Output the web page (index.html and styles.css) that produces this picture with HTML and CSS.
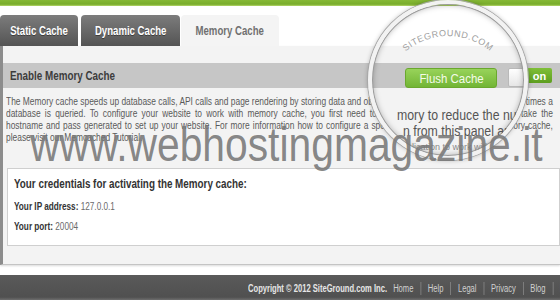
FILE: index.html
```html
<!DOCTYPE html>
<html>
<head>
<meta charset="utf-8">
<link rel="stylesheet" href="styles.css">
</head>
<body>
<div class="page">
  <div class="topbar"></div>
  <div class="tabs">
    <div class="tab dark tab-static"><span class="tab-label">Static Cache</span></div>
    <div class="tab dark tab-dynamic"><span class="tab-label">Dynamic Cache</span></div>
    <div class="tab active"><span class="tab-label">Memory Cache</span></div>
  </div>
  <div class="panel">
    <div class="enable-bar">
      <span class="enable-title">Enable Memory Cache</span>
      <div class="controls">
        <button class="flush"><span class="flush-label">Flush Cache</span></button>
        <div class="toggle"><span class="off"></span><span class="on">on</span></div>
      </div>
    </div>
    <div class="desc">
      <div class="line">The Memory cache speeds up database calls, API calls and page rendering by storing data and objects in memory to reduce the number of times a</div>
      <div class="line">database is queried. To configure your website to work with memory cache, you first need to enable it from this panel and then take the</div>
      <div class="line">hostname and pass generated to set up your website. For more information how to configure a specific application to work with memory cache,</div>
      <div class="line last">please visit our Memcached Tutorial.</div>
    </div>
    <div class="cred">
      <div class="cred-title">Your credentials for activating the Memory cache:</div>
      <div class="cred-row"><b>Your IP address:</b> <span>127.0.0.1</span></div>
      <div class="cred-row port"><b>Your port:</b> <span>20004</span></div>
    </div>
  </div>
  <div class="gap"></div>
  <div class="footer">
    <div class="footer-inner">
      <span class="copy">Copyright © 2012 SiteGround.com Inc.</span>
      <span class="flink">Home</span><span class="sep"></span>
      <span class="flink">Help</span><span class="sep"></span>
      <span class="flink">Legal</span><span class="sep"></span>
      <span class="flink">Privacy</span><span class="sep"></span>
      <span class="flink">Blog</span><span class="sep"></span>
      <span class="flink">Forum</span>
    </div>
  </div>

  <div class="magnifier">
    <svg class="arc" width="160" height="160" viewBox="0 0 160 160">
      <defs><path id="arcpath" d="M 16 86 A 66 66 0 0 1 144 86"/></defs>
      <text class="arc-text"><textPath href="#arcpath" startOffset="50%" text-anchor="middle">SITEGROUND.COM</textPath></text>
    </svg>
    <div class="mag-line l1">mory to reduce the number</div>
    <div class="mag-line l2">n from this panel and</div>
    <div class="mag-line l3">lication to work with</div>
  </div>
  <div class="watermark">www.webhostingmagazine.it</div>
</div>
</body>
</html>
```
FILE: styles.css
```css
* { box-sizing: border-box; }
html, body { margin: 0; padding: 0; }
body {
  width: 560px;
  height: 300px;
  overflow: hidden;
  background: #ffffff;
  font-family: "Liberation Sans", Arial, sans-serif;
}
.page { position: relative; width: 560px; height: 300px; overflow: hidden; }

.topbar {
  height: 6px;
  background: linear-gradient(#86b936, #79ad2c 70%, #b5d66a);
}

.tabs {
  display: flex;
  margin-top: 9px;
  height: 31px;
}
.tab {
  display: flex;
  align-items: center;
  justify-content: center;
  font-size: 12px;
  font-weight: bold;
  border-radius: 4px 4px 0 0;
  white-space: nowrap;
}
.tab-label { display: inline-block; transform: scaleX(0.8); }
.tab.dark {
  color: #ffffff;
  background: linear-gradient(#7c7c7c, #545454);
  text-shadow: 0 1px 0 rgba(0,0,0,0.4);
}
.tab-static { width: 78px; margin-right: 3px; }
.tab-dynamic { width: 99px; margin-right: 1px; }
.tab.active {
  width: 98px;
  color: #707070;
  background: #f4f4f4;
}

.panel {
  background: #f3f3f3;
  border-left: 3px solid #8c8c8c;
  border-bottom: 1px solid #c4c4c4;
  box-shadow: 0 1px 2px rgba(0,0,0,0.15);
  padding: 17px 0 18px 0;
}

.enable-bar {
  height: 25px;
  background: #c6c6c6;
  display: flex;
  align-items: center;
  justify-content: space-between;
  padding: 0 8px 0 7px;
}
.enable-title {
  display: inline-block;
  font-size: 12px;
  font-weight: bold;
  color: #3c3c3c;
  transform: scaleX(0.82);
  transform-origin: left center;
}
.controls {
  display: flex;
  align-items: flex-start;
  gap: 11px;
  margin-top: 5px;
}
.flush {
  width: 92px;
  height: 20px;
  border: 1px solid #6aa82e;
  border-radius: 3px;
  background: linear-gradient(#98d35a, #72b535);
  color: #f4fbe9;
  font-family: "Liberation Sans", Arial, sans-serif;
  font-size: 13px;
  padding: 0;
  white-space: nowrap;
}
.flush-label { display: inline-block; transform: scaleX(0.88); }
.toggle { display: flex; align-items: flex-start; }
.toggle .off {
  width: 19px;
  height: 19px;
  border: 1px solid #b9b9b9;
  border-radius: 2px;
  background: linear-gradient(#ffffff, #e6e6e6);
}
.toggle .on {
  width: 25px;
  height: 15px;
  background: linear-gradient(#7fbf38, #5d9e1f);
  color: #ffffff;
  font-size: 11px;
  font-weight: bold;
  display: flex;
  align-items: center;
  justify-content: center;
  border-radius: 2px;
}

.desc {
  margin-top: 8px;
  padding: 0 7px 0 3px;
  font-size: 10px;
  line-height: 12px;
  color: #5a5a5a;
}
.desc .line {
  width: 651px;
  white-space: nowrap;
  text-align: justify;
  text-align-last: justify;
  transform: scaleX(0.84);
  transform-origin: left center;
}
.desc .line.last { text-align-last: left; }

.cred {
  margin: 24px 0 0 4px;
  background: #ffffff;
  border: 1px solid #cfcfcf;
  padding: 8px 6px 11px 6px;
}
.cred-title {
  font-size: 12px;
  font-weight: bold;
  line-height: 14px;
  color: #333333;
  transform: scaleX(0.82);
  transform-origin: left center;
}
.cred-row {
  margin-top: 9px;
  font-size: 10px;
  line-height: 14px;
  color: #6a6a6a;
  transform: scaleX(0.82);
  transform-origin: left center;
}
.cred-row b { color: #333333; }
.cred-row.port { margin-top: 6px; }

.gap { height: 10px; }

.footer {
  height: 26px;
  background: linear-gradient(#5a5a5a, #505050 85%, #787878);
  display: flex;
  align-items: center;
  padding-left: 248px;
}
.footer-inner {
  display: flex;
  align-items: center;
  white-space: nowrap;
  font-size: 10px;
  color: #d0d0d0;
  transform: scaleX(0.76);
  transform-origin: left center;
}
.footer .copy { font-weight: bold; color: #e6e6e6; margin-right: 8px; }
.footer .sep {
  width: 1px;
  height: 13px;
  background: #8a8a8a;
  margin: 0 9px;
}

.magnifier {
  position: absolute;
  left: 368px;
  top: 0;
  width: 160px;
  height: 160px;
  border-radius: 50%;
  overflow: hidden;
  background: linear-gradient(transparent 91px, #f3f3f3 91px);
  border: 4px solid #f2f2f2;
  box-shadow: 0 0 0 1px #a8a8a8, inset 0 0 0 1px #9c9c9c, inset 0 0 6px rgba(0,0,0,0.35), 0 0 5px rgba(0,0,0,0.3);
}
.arc { position: absolute; left: -4px; top: -4px; }
.arc-text {
  font-family: "Liberation Sans", Arial, sans-serif;
  font-size: 9px;
  letter-spacing: 0.6px;
  fill: #a0a0a0;
}
.mag-line {
  position: absolute;
  white-space: nowrap;
  font-family: "Liberation Sans", Arial, sans-serif;
  font-size: 15px;
  line-height: 16px;
  color: #555555;
  transform: scaleX(0.82);
  transform-origin: left top;
}
.mag-line.l1 { left: 25px; top: 103px; }
.mag-line.l2 { left: 31px; top: 119px; }
.mag-line.l3 { left: 40px; top: 135px; font-size: 9px; color: #888; transform: none; }

.watermark {
  position: absolute;
  left: 30px;
  top: 121px;
  font-family: "Liberation Sans", Arial, sans-serif;
  font-size: 48px;
  line-height: 48px;
  color: rgba(120,120,120,0.9);
  white-space: nowrap;
  transform: scaleX(0.85);
  transform-origin: left top;
}
```
